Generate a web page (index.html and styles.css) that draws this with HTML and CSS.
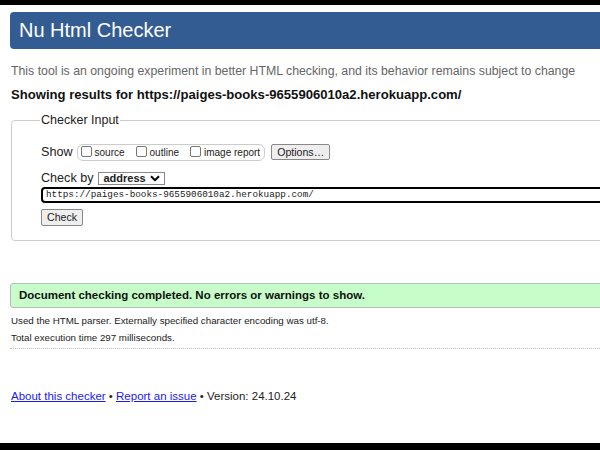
FILE: index.html
```html
<!DOCTYPE html>
<html>
<head>
<meta charset="utf-8">
<link rel="stylesheet" href="styles.css">
</head>
<body>
<div class="page">
  <h1 class="title">Nu Html Checker</h1>
  <p class="intro">This tool is an ongoing experiment in better HTML checking, and its behavior remains subject to change</p>
  <p class="showing">Showing results for https://paiges-books-9655906010a2.herokuapp.com/</p>
  <fieldset class="input-box">
    <legend class="legend">Checker Input</legend>
    <div class="row show-row">
      <span class="lbl">Show</span>
      <span class="opts">
        <label class="opt"><span class="cb"></span>source</label>
        <label class="opt"><span class="cb"></span>outline</label>
        <label class="opt"><span class="cb"></span>image report</label>
      </span>
      <span class="btn">Options…</span>
    </div>
    <div class="row by-row">
      <span class="lbl">Check by</span>
      <span class="select">address<svg class="chev" width="10" height="7" viewBox="0 0 10 7"><path d="M1 1.2 L5 5.2 L9 1.2" fill="none" stroke="#000" stroke-width="2"/></svg></span>
    </div>
    <div class="url">https://paiges-books-9655906010a2.herokuapp.com/</div>
    <span class="btn check">Check</span>
  </fieldset>
  <div class="success">Document checking completed. No errors or warnings to show.</div>
  <p class="meta first">Used the HTML parser. Externally specified character encoding was utf-8.</p>
  <p class="meta">Total execution time 297 milliseconds.</p>
  <div class="dots"></div>
  <p class="footer"><a href="#">About this checker</a> • <a href="#">Report an issue</a> • Version: 24.10.24</p>
</div>
</body>
</html>
```

FILE: styles.css
```css
html, body {
  margin: 0;
  padding: 0;
  background: #000;
  overflow: hidden;
  width: 600px;
  height: 450px;
}
.page {
  margin-top: 5px;
  height: 438px;
  width: 640px;
  background: #fff;
  font-family: "Liberation Sans", Arial, sans-serif;
  color: #222;
  overflow: hidden;
  padding-top: 7px;
  box-sizing: border-box;
}
.title {
  margin: 0 0 0 10px;
  height: 37px;
  background: #335d92;
  border-radius: 4px;
  color: #fff;
  font-weight: normal;
  font-size: 20px;
  line-height: 37px;
  padding-left: 9px;
}
.intro {
  margin: 14px 0 0 11px;
  font-size: 12.3px;
  line-height: 16px;
  color: #666;
}
.showing {
  margin: 8px 0 0 11px;
  font-size: 13.1px;
  line-height: 16px;
  font-weight: bold;
  color: #111;
}
.input-box {
  margin: 10px 0 0 11px;
  border: 1px solid #ccc;
  border-radius: 4px;
  padding: 10px 0 12px 29px;
  box-sizing: border-box;
  height: 128px;
}
.legend {
  font-size: 12.5px;
  padding: 0 1px;
  margin-left: -1px;
  color: #222;
}
.row {
  display: flex;
  align-items: center;
}
.show-row {
  margin-top: 6px;
  height: 18px;
}
.lbl {
  font-size: 12.6px;
  color: #222;
}
.opts {
  display: flex;
  align-items: center;
  margin-left: 4px;
  border: 1px solid #ccc;
  border-radius: 6px;
  height: 15px;
  padding: 0 4px 0 3px;
  gap: 11px;
}
.opt {
  display: flex;
  align-items: center;
  font-size: 10px;
  color: #222;
}
.cb {
  width: 9px;
  height: 9px;
  border: 1px solid #777;
  border-radius: 2px;
  margin-right: 3px;
  margin-top: -2px;
}
.btn {
  display: inline-block;
  font-size: 10.6px;
  border: 1px solid #888;
  background: #eee;
  border-radius: 2px;
  padding: 1px 5px;
  line-height: 12px;
  color: #222;
}
.show-row .btn {
  margin-left: 6px;
}
.by-row {
  margin-top: 9px;
  height: 16px;
}
.select {
  display: flex;
  align-items: center;
  justify-content: space-between;
  margin-left: 4px;
  width: 56px;
  height: 11px;
  border: 1px solid #888;
  font-size: 11px;
  font-weight: bold;
  color: #222;
  padding: 0 4px 0 5px;
  line-height: 11px;
}
.url {
  margin-top: 1px;
  height: 12px;
  border: 2px solid #000;
  border-radius: 4px 0 0 4px;
  font-family: "Liberation Mono", "DejaVu Sans Mono", monospace;
  font-size: 9.3px;
  line-height: 12px;
  padding-left: 3px;
  color: #222;
  margin-right: -2px;
}
.check {
  margin-top: 6px;
  line-height: 13px;
}
.success {
  margin: 42px 0 0 10px;
  height: 23px;
  background: #c6fdc9;
  border: 1px solid #bbb;
  border-radius: 3px;
  font-size: 11.5px;
  font-weight: bold;
  line-height: 23px;
  padding-left: 8px;
  color: #111;
}
.meta {
  margin: 4px 0 0 11px;
  font-size: 9.75px;
  line-height: 13px;
  color: #222;
}
.meta.first {
  margin-top: 6px;
}
.dots {
  margin: 4px 0 0 10px;
  border-top: 1px dotted #bbb;
}
.footer {
  margin: 41px 0 0 11px;
  font-size: 11.5px;
  color: #222;
}
.footer a {
  color: #1a1aee;
}
```
